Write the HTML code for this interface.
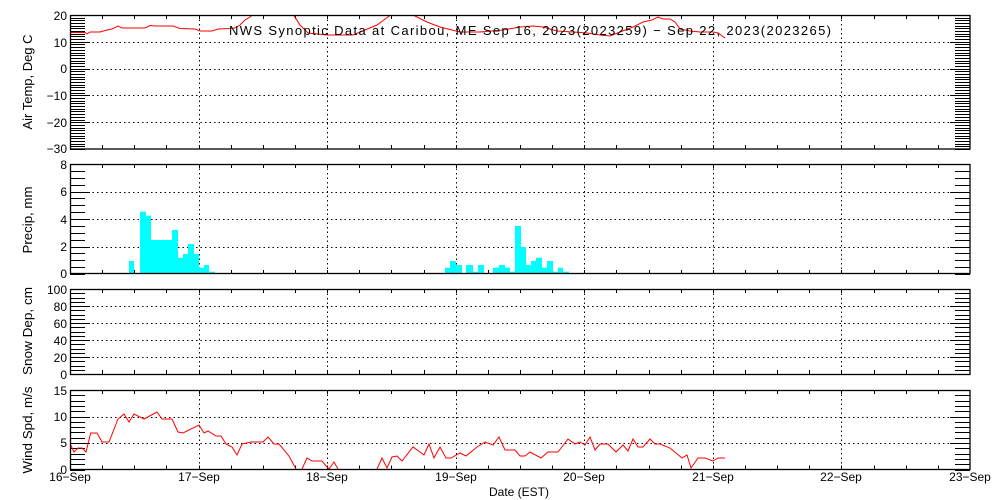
<!DOCTYPE html>
<html><head><meta charset="utf-8"><style>
html,body{margin:0;padding:0;background:#fff;}
svg{display:block;font-family:"Liberation Sans",sans-serif;}
</style></head><body>
<svg id="s" width="1000" height="500" xmlns="http://www.w3.org/2000/svg">
<defs>
<clipPath id="c1"><rect x="70" y="15" width="900" height="134"/></clipPath>
<clipPath id="c4"><rect x="70" y="390" width="900" height="79.5"/></clipPath>
</defs>
<g id="grid" stroke="#000" stroke-width="1" stroke-dasharray="1.5,3" fill="none"></g>
<g id="ticks" stroke="#000" stroke-width="1" fill="none"></g>
<g fill="#00ffff">
<rect x="129" y="261" width="5" height="12"/>
<rect x="140" y="211.7" width="6" height="61.3"/>
<rect x="146" y="215.7" width="5" height="57.3"/>
<rect x="151" y="240" width="21" height="33"/>
<rect x="172" y="230" width="6" height="43"/>
<rect x="178" y="257.7" width="5" height="15.3"/>
<rect x="183" y="254" width="5" height="19"/>
<rect x="188" y="244" width="6" height="29"/>
<rect x="194" y="254" width="5" height="19"/>
<rect x="199" y="267.7" width="5" height="5.3"/>
<rect x="204" y="265" width="5" height="8"/>
<rect x="209" y="271.7" width="6" height="1.3"/>
<rect x="445" y="267.7" width="5" height="5.3"/>
<rect x="450" y="261" width="6" height="12"/>
<rect x="456" y="265" width="6" height="8"/>
<rect x="466" y="265" width="7" height="8"/>
<rect x="473" y="271.7" width="5" height="1.3"/>
<rect x="478" y="265" width="6" height="8"/>
<rect x="493" y="267.7" width="6" height="5.3"/>
<rect x="499" y="265" width="6" height="8"/>
<rect x="505" y="267.7" width="5" height="5.3"/>
<rect x="510" y="271.7" width="5" height="1.3"/>
<rect x="515" y="226" width="6" height="47"/>
<rect x="521" y="247" width="5" height="26"/>
<rect x="526" y="265" width="5" height="8"/>
<rect x="531" y="261" width="5" height="12"/>
<rect x="536" y="257.7" width="6" height="15.3"/>
<rect x="542" y="267.7" width="5" height="5.3"/>
<rect x="547" y="261" width="6" height="12"/>
<rect x="553" y="271.7" width="5" height="1.3"/>
<rect x="558" y="267.7" width="5" height="5.3"/>
<rect x="563" y="271.7" width="6" height="1.3"/>
</g>
<g fill="none" stroke="#ff0000" stroke-width="1">
<polyline clip-path="url(#c1)" points="70,32.5 85,32.5 87,34 90,32 100,32 105,30.5 112,29 118,26 122,28 145,28 150,25.5 155,26 173,26 180,28.5 195,29 200,31 212,31 218,29 230,28.5 235,28 240,25 245,20 250,17 256,12 293,12 293,14 300,25 308,33 327,35 353,35 377,25 392,14 394,10 411,10 413,15 427,22 440,27 460,32 480,32 503,30 520,27 533,26 543,27 557,31 573,32 587,33 600,35 610,36 620,32 633,27 643,22 652,20 658,17 663,19 670,19 675,22 680,29 690,31 700,32 713,32 718,33 725,38"/>
<polyline clip-path="url(#c4)" points="70.7,445 74,452 78,448 82,448 86,452 90.7,433 97,433 102,442 109,442 118,419 124,414 129,422 134,414 144,419 157,412 162,419 172,419 178,432 183,433 199,425 204,433 208,431 216,436 221,436 226,444 232,447 237,455 242,444 251,442 263,442 268,437 274,444 279,444 289,456 296,469"/>
<polyline clip-path="url(#c4)" points="302,469 307,458 312,461 322,461 327,467 329,469 334,462 338,469"/>
<polyline clip-path="url(#c4)" points="377,469 382,458 387,468 392,457 397,456 402,461 413,447 424,455 429,444 434,458 440,447 446,458 451,458 460,453 466,456 477,447 485,442 493,445 499,437 505,450 515,450 520,456 525,456 530,452 541,458 548,452 558,452 568,439 575,444 580,442 585,445 590,437 595,450 600,444 608,444 616,452 623,445 628,451 633,439 638,447 643,447 650,439 655,444 660,444 670,448 682,458 687,455 691,468 698,458 705,458 713,461 718,458 725,458"/>
</g>
<g fill="none" stroke="#000" stroke-width="1.3">
<rect x="70.5" y="15.5" width="899.5" height="133.5"/>
<rect x="70.5" y="164.5" width="899.5" height="109"/>
<rect x="70.5" y="289.5" width="899.5" height="85"/>
<rect x="70.5" y="390.5" width="899.5" height="79"/>
</g>
<g font-size="12" fill="#000" text-anchor="end">
<text x="67" y="20">20</text><text x="67" y="47">10</text><text x="67" y="73">0</text>
<text x="67" y="100">−10</text><text x="67" y="127">−20</text><text x="67" y="153">−30</text>
<text x="67" y="169">8</text><text x="67" y="196">6</text><text x="67" y="224">4</text>
<text x="67" y="251">2</text><text x="67" y="278">0</text>
<text x="67" y="294">100</text><text x="67" y="311">80</text><text x="67" y="328">60</text>
<text x="67" y="345">40</text><text x="67" y="362">20</text><text x="67" y="379">0</text>
<text x="67" y="395">15</text><text x="67" y="421">10</text><text x="67" y="447">5</text><text x="67" y="474">0</text>
</g>
<g font-size="12" fill="#000" text-anchor="middle">
<text x="70" y="481">16−Sep</text><text x="199" y="481">17−Sep</text><text x="327" y="481">18−Sep</text>
<text x="456" y="481">19−Sep</text><text x="584" y="481">20−Sep</text><text x="713" y="481">21−Sep</text>
<text x="841" y="481">22−Sep</text><text x="970" y="481">23−Sep</text>
<text x="519" y="496">Date (EST)</text>
</g>
<g font-size="13" fill="#000" text-anchor="middle">
<text transform="translate(32,82) rotate(-90)" textLength="95" lengthAdjust="spacingAndGlyphs">Air Temp, Deg C</text>
<text transform="translate(32,220) rotate(-90)" textLength="67" lengthAdjust="spacingAndGlyphs">Precip, mm</text>
<text transform="translate(32,331) rotate(-90)" textLength="88" lengthAdjust="spacingAndGlyphs">Snow Dep, cm</text>
<text transform="translate(32,430) rotate(-90)" textLength="87" lengthAdjust="spacingAndGlyphs">Wind Spd, m/s</text>
</g>
<text x="229" y="35" font-size="13" fill="#000" textLength="602" lengthAdjust="spacing">NWS Synoptic Data at Caribou, ME   Sep 16, 2023(2023259) − Sep 22, 2023(2023265)</text>
</svg>
<script>
(function(){
var NS="http://www.w3.org/2000/svg";
var grid=document.getElementById("grid"),ticks=document.getElementById("ticks");
function ln(g,x1,y1,x2,y2){var l=document.createElementNS(NS,"line");l.setAttribute("x1",x1);l.setAttribute("y1",y1);l.setAttribute("x2",x2);l.setAttribute("y2",y2);g.appendChild(l);}
var panels=[[15,149,-30,20,1,[-20,-10,0,10]],[164,274,0,8,0.5,[2,4,6]],[289,374,0,100,5,[20,40,60,80]],[390,469.5,0,15,1,[5,10]]];
var dx=900/7;
panels.forEach(function(p){
 var top=p[0],bot=p[1],lo=p[2],hi=p[3],st=p[4];
 function Y(v){return bot-(v-lo)/(hi-lo)*(bot-top);}
 for(var v=lo;v<=hi+1e-6;v+=st){var y=Math.round(Y(v))+0.5;ln(ticks,70,y,85,y);ln(ticks,955,y,970,y);}
 p[5].forEach(function(v){var y=Math.round(Y(v))+0.5;ln(grid,70,y,970,y);ln(ticks,70,y,90,y);ln(ticks,950,y,970,y);});
 for(var k=1;k<7;k++){var x=Math.round(70+dx*k)+0.5;ln(grid,x,top,x,bot);}
 for(var k=1;k<28;k++){var x=Math.round(70+dx*k/4)+0.5;ln(ticks,x,top,x,top+4);ln(ticks,x,bot-4,x,bot);}
});
})();
</script>
</body></html>
